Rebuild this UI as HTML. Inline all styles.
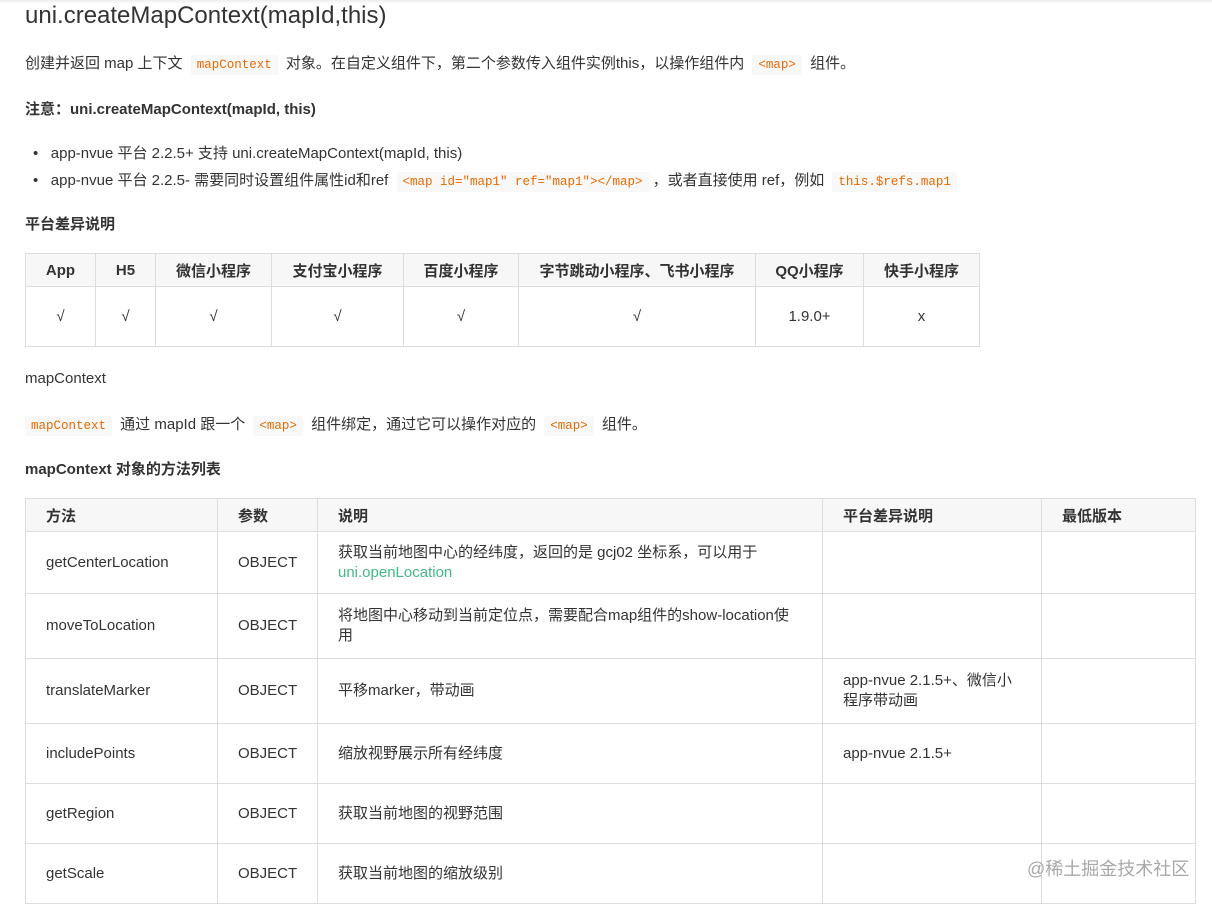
<!DOCTYPE html>
<html><head><meta charset="utf-8"><style>
body{margin:0;width:1212px;height:902px;overflow:hidden;background:#fff;font-family:"Liberation Sans","Noto Sans CJK SC",sans-serif;color:#333;font-size:15px;position:relative}
.a{position:absolute;white-space:nowrap}
code{font-family:"Liberation Mono",monospace;font-size:12.5px;color:#e96900;background:#f8f8f8;padding:3px 6px;border-radius:2px;margin:0 4px}
table{position:absolute;border-collapse:collapse;table-layout:fixed}
td,th{border:1px solid #dcdcdc;font-size:15px;color:#333}
th{background:#f7f7f7;font-weight:bold}
.t1 td,.t1 th{text-align:center;padding:0}
.t2 th,.t2 td{text-align:left;padding:0 20px;vertical-align:middle}
.t2 td{line-height:20px}
a{color:#42b983}
</style></head><body>
<div style="position:absolute;top:0;left:0;width:1212px;height:4px;background:linear-gradient(#eee,#fff)"></div>
<div class="a" style="left:25px;top:2px;font-size:24px;color:#333">uni.createMapContext(mapId,this)</div>
<div class="a" style="left:25px;top:52px">创建并返回 map 上下文 <code>mapContext</code> 对象。在自定义组件下，第二个参数传入组件实例this，以操作组件内 <code>&lt;map&gt;</code> 组件。</div>
<div class="a" style="left:25px;top:98px;font-weight:bold">注意：uni.createMapContext(mapId, this)</div>
<div class="a" style="left:33px;top:142px">•&nbsp;&nbsp; app-nvue 平台 2.2.5+ 支持 uni.createMapContext(mapId, this)</div>
<div class="a" style="left:33px;top:169px">•&nbsp;&nbsp; app-nvue 平台 2.2.5- 需要同时设置组件属性id和ref <code>&lt;map id="map1" ref="map1"&gt;&lt;/map&gt;</code>，或者直接使用 ref，例如 <code>this.$refs.map1</code></div>
<div class="a" style="left:25px;top:213px;font-weight:bold">平台差异说明</div>
<table class="t1" style="left:25px;top:253px;width:955px">
<colgroup><col style="width:70px"><col style="width:60px"><col style="width:116px"><col style="width:132px"><col style="width:115px"><col style="width:237px"><col style="width:108px"><col style="width:116px"></colgroup>
<tr style="height:33px"><th>App</th><th>H5</th><th>微信小程序</th><th>支付宝小程序</th><th>百度小程序</th><th>字节跳动小程序、飞书小程序</th><th>QQ小程序</th><th>快手小程序</th></tr>
<tr style="height:60px"><td>√</td><td>√</td><td>√</td><td>√</td><td>√</td><td>√</td><td>1.9.0+</td><td>x</td></tr>
</table>
<div class="a" style="left:25px;top:370px">mapContext</div>
<div class="a" style="left:25px;top:413px"><code style="margin-left:0">mapContext</code> 通过 mapId 跟一个 <code>&lt;map&gt;</code> 组件绑定，通过它可以操作对应的 <code>&lt;map&gt;</code> 组件。</div>
<div class="a" style="left:25px;top:458px;font-weight:bold">mapContext 对象的方法列表</div>
<table class="t2" style="left:25px;top:498px;width:1170px">
<colgroup><col style="width:192px"><col style="width:100px"><col style="width:505px"><col style="width:219px"><col style="width:154px"></colgroup>
<tr style="height:33px"><th>方法</th><th>参数</th><th>说明</th><th>平台差异说明</th><th>最低版本</th></tr>
<tr style="height:62px"><td>getCenterLocation</td><td>OBJECT</td><td>获取当前地图中心的经纬度，返回的是 gcj02 坐标系，可以用于<br><a>uni.openLocation</a></td><td></td><td></td></tr>
<tr style="height:65px"><td>moveToLocation</td><td>OBJECT</td><td>将地图中心移动到当前定位点，需要配合map组件的show-location使<br>用</td><td></td><td></td></tr>
<tr style="height:65px"><td>translateMarker</td><td>OBJECT</td><td>平移marker，带动画</td><td>app-nvue 2.1.5+、微信小<br>程序带动画</td><td></td></tr>
<tr style="height:60px"><td>includePoints</td><td>OBJECT</td><td>缩放视野展示所有经纬度</td><td>app-nvue 2.1.5+</td><td></td></tr>
<tr style="height:60px"><td>getRegion</td><td>OBJECT</td><td>获取当前地图的视野范围</td><td></td><td></td></tr>
<tr style="height:60px"><td>getScale</td><td>OBJECT</td><td>获取当前地图的缩放级别</td><td></td><td></td></tr>
</table>
<div class="a" style="left:1027px;top:855px;font-size:18px;color:#a8a8a8">@稀土掘金技术社区</div>
</body></html>
